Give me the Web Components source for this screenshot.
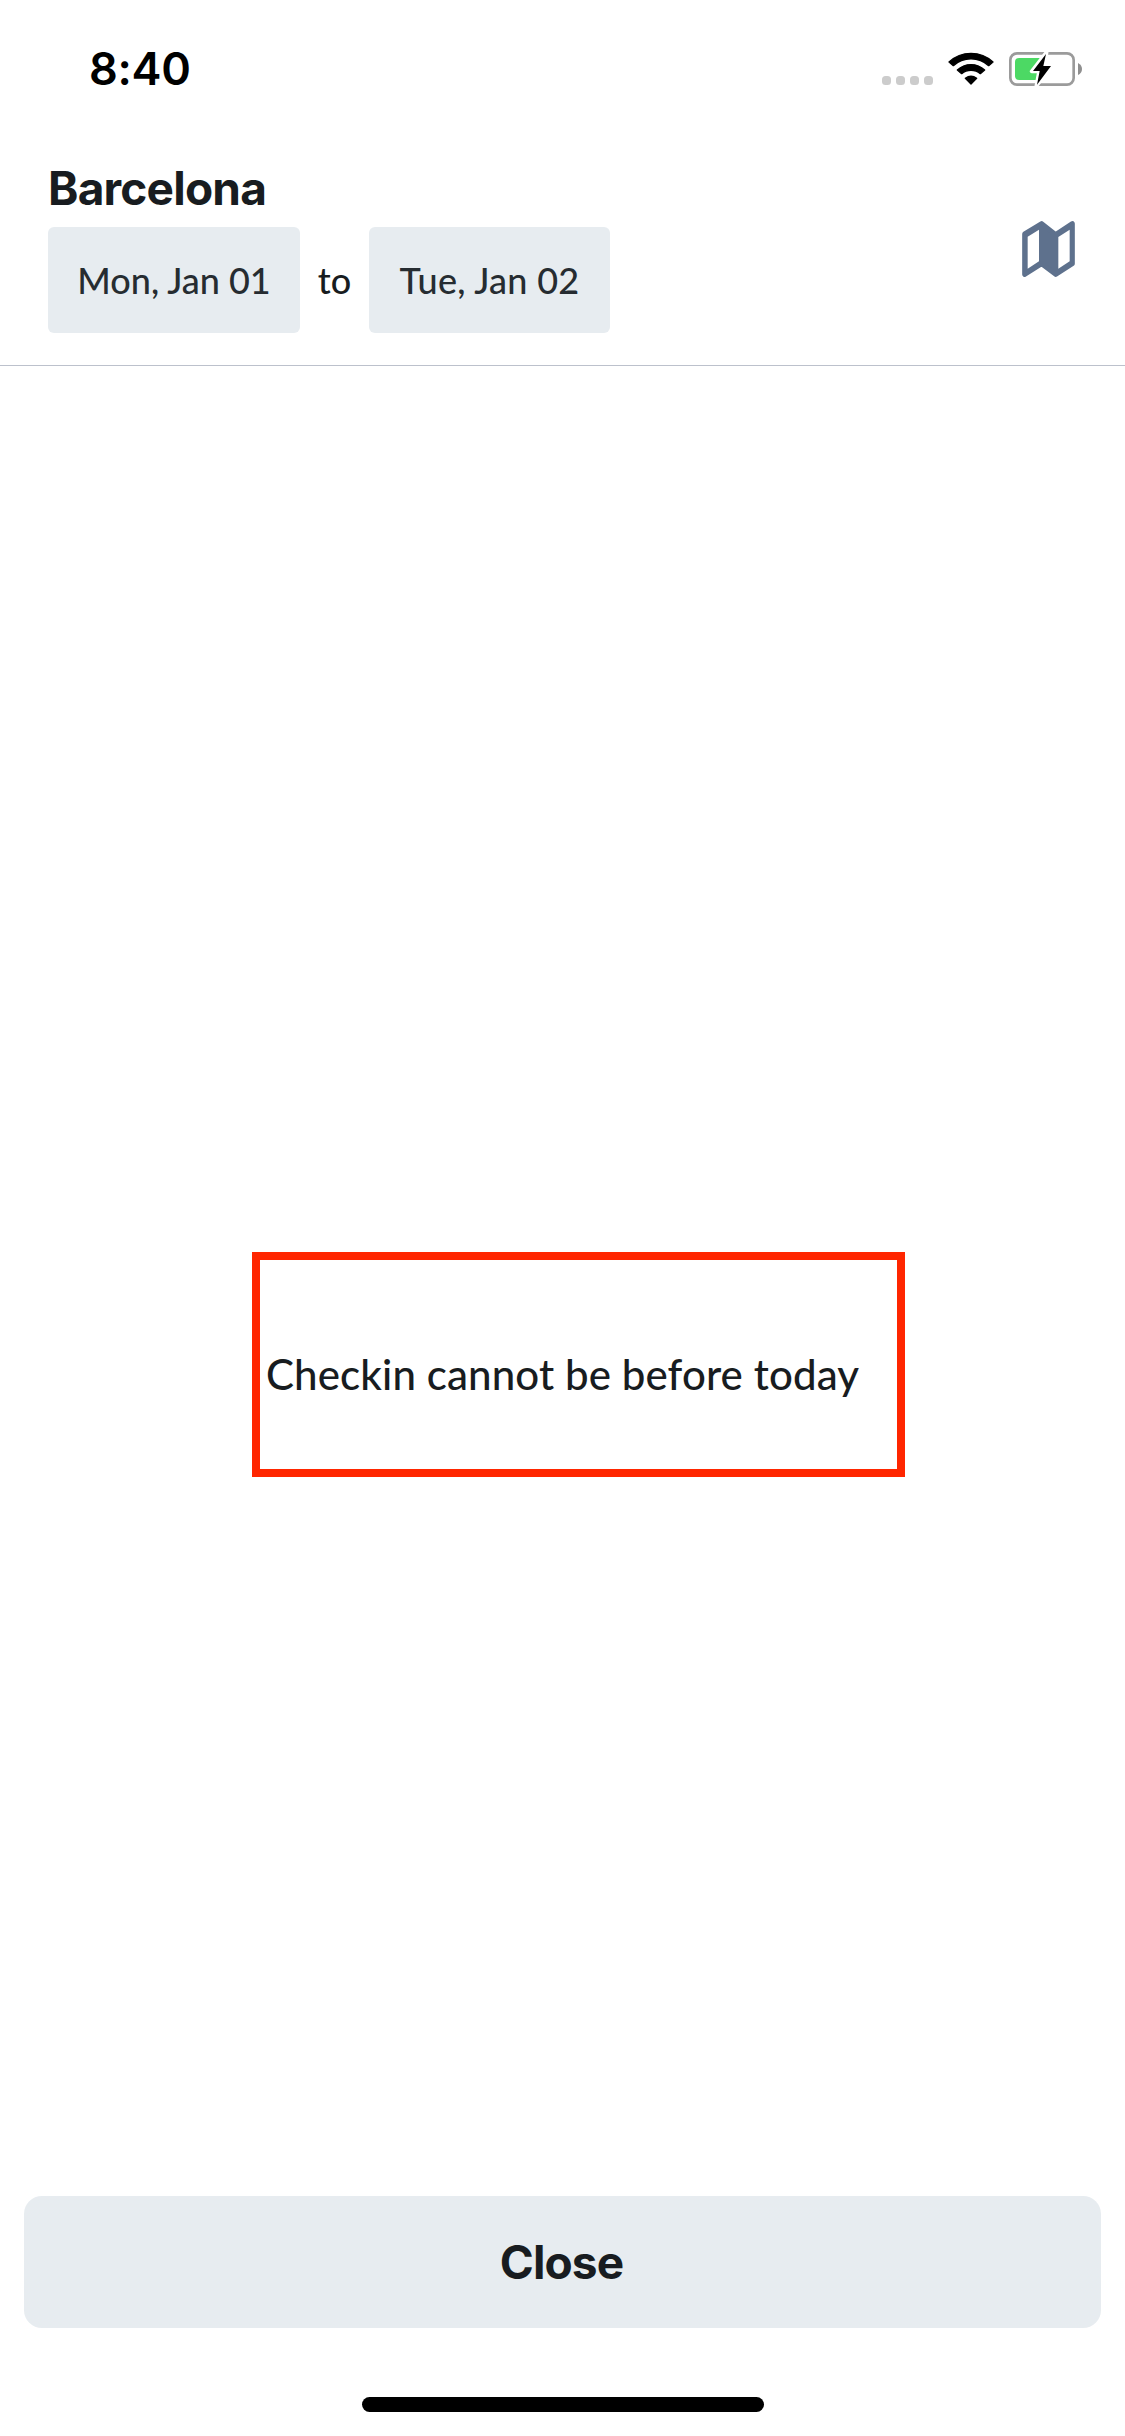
<!DOCTYPE html>
<html lang="en">
<head>
<meta charset="utf-8">
<title>Barcelona</title>
<style>
  html, body { margin: 0; height: 100%; background: #fff; }
  body { font-family: Lato, "Liberation Sans", sans-serif; color: #181c20; }
</style>
</head>
<body>
<search-screen></search-screen>
<script>
const define = (name, html) => customElements.define(name, class extends HTMLElement {
  constructor() {
    super();
    this.attachShadow({ mode: 'open' }).innerHTML = html;
  }
});

define('signal-dots', `
  <style>
    :host { display: flex; gap: 5px; }
    i { width: 9px; height: 9px; border-radius: 3.5px; background: #ccc; }
  </style><i></i><i></i><i></i><i></i>`);

define('wifi-icon', `
  <style>:host { display: block; } svg { display: block; }</style>
  <svg width="46" height="33" viewBox="264 66 138 99">
    <g fill="#000" stroke="#000" stroke-width="4" stroke-linejoin="round">
      <path d="M267 96 A97 97 0 0 1 399 96 L386 107 A78 78 0 0 0 280 107 Z"/>
      <path d="M292 120 A60 60 0 0 1 374 120 L361 131 A43 43 0 0 0 305 131 Z"/>
      <path d="M316 145 A29 29 0 0 1 350 145 L333 162 Z"/>
    </g>
  </svg>`);

define('battery-icon', `
  <style>:host { display: block; } svg { display: block; }</style>
  <svg width="74" height="34" viewBox="447 66 222 102">
    <rect x="451" y="70" width="190" height="94" rx="20" fill="none" stroke="#9b9b9b" stroke-width="8"/>
    <path d="M654 99 Q666 105 666 117 Q666 129 654 135 Z" fill="#8f8f8f"/>
    <path d="M478 84 H545 V150 H478 Q465 150 465 137 V97 Q465 84 478 84 Z" fill="#4cd964"/>
    <path d="M560 66 L515 124 H537 L529 168 L577 107 H554 Z" fill="#fff" stroke="#fff" stroke-width="11" stroke-linejoin="round"/>
    <path d="M558 72 L519 123 H539 L531 164 L573 108 H550 Z" fill="#000"/>
  </svg>`);

define('map-icon', `
  <style>:host { display: block; } svg { display: block; }</style>
  <svg width="53" height="56" viewBox="66 62 159 168">
    <path d="M74 101 L125 70 L167 103 L217 70 V190 L167 222 L125 190 L74 222 Z"
      fill="#5e718d" stroke="#5e718d" stroke-width="15" stroke-linejoin="round"/>
    <path d="M83 109 L117 88 V183 L83 205 Z M175 110 L209 88 V183 L175 205 Z" fill="#fff"/>
  </svg>`);

define('status-bar', `
  <style>
    :host { display: flex; box-sizing: border-box; height: 132px; padding: 0 42px 0 89px; justify-content: space-between; align-items: flex-start; }
    time { margin-top: 42px; font: 600 45px/54px Inter, sans-serif; letter-spacing: -0.3px; color: #000; }
    .icons { display: flex; align-items: flex-start; padding-top: 52px; }
    signal-dots { margin: 24px 15px 0 0; }
    wifi-icon { margin-right: 15px; }
  </style>
  <time>8:40</time>
  <div class="icons"><signal-dots></signal-dots><wifi-icon></wifi-icon><battery-icon></battery-icon></div>`);

define('date-chip', `
  <style>
    :host { display: flex; box-sizing: border-box; height: 106px; align-items: center; justify-content: center; border-radius: 6px; background: #e7ecf0; color: #262c31; font-size: 36px; font-weight: 500; line-height: 44px; white-space: nowrap; }
  </style><slot></slot>`);

define('search-header', `
  <style>
    :host { display: flex; box-sizing: border-box; height: 234px; padding: 28px 50px 0 48px; justify-content: space-between; border-bottom: 1px solid #bcc1cc; }
    h1 { margin: 0 0 11px; height: 56px; font: 650 46px/56px Inter, sans-serif; letter-spacing: -0.8px; }
    .dates { display: flex; align-items: center; }
    .from { width: 252px; letter-spacing: 0; }
    .until { width: 241px; letter-spacing: 0.3px; }
    span { width: 69px; text-align: center; font-size: 36px; font-weight: 500; line-height: 44px; }
    map-icon { margin-top: 61px; }
  </style>
  <div>
    <h1><slot></slot></h1>
    <div class="dates"><date-chip class="from">Mon, Jan 01</date-chip><span>to</span><date-chip class="until">Tue, Jan 02</date-chip></div>
  </div>
  <map-icon></map-icon>`);

define('message-box', `
  <style>
    :host { display: flex; box-sizing: border-box; width: 653px; height: 225px; border: 8px solid #ff2600; padding: 18px 0 0 6px; align-items: center; font-size: 42px; font-weight: 500; line-height: 50px; letter-spacing: 0.12px; white-space: nowrap; }
  </style><slot></slot>`);

define('close-button', `
  <style>
    :host { display: block; }
    button { display: block; box-sizing: border-box; width: 100%; height: 132px; margin: 0; border: 0; border-radius: 18px; padding: 0 2px 0 0; background: #e7ecf0; color: #181c20; font: 650 46px/56px Inter, sans-serif; letter-spacing: -0.9px; }
  </style><button><slot></slot></button>`);

define('home-indicator', `
  <style>:host { display: block; width: 402px; height: 15px; border-radius: 8px; background: #000; }</style>`);

define('search-screen', `
  <style>
    :host { display: flex; flex-direction: column; width: 1125px; height: 2436px; background: #fff; }
    main { flex: 1; padding: 886px 0 0 252px; }
    footer { display: flex; flex-direction: column; align-items: center; gap: 69px; padding: 0 24px 24px; }
    close-button { align-self: stretch; }
  </style>
  <status-bar></status-bar>
  <search-header>Barcelona</search-header>
  <main><message-box>Checkin cannot be before today</message-box></main>
  <footer><close-button>Close</close-button><home-indicator></home-indicator></footer>`);
</script>
</body>
</html>
